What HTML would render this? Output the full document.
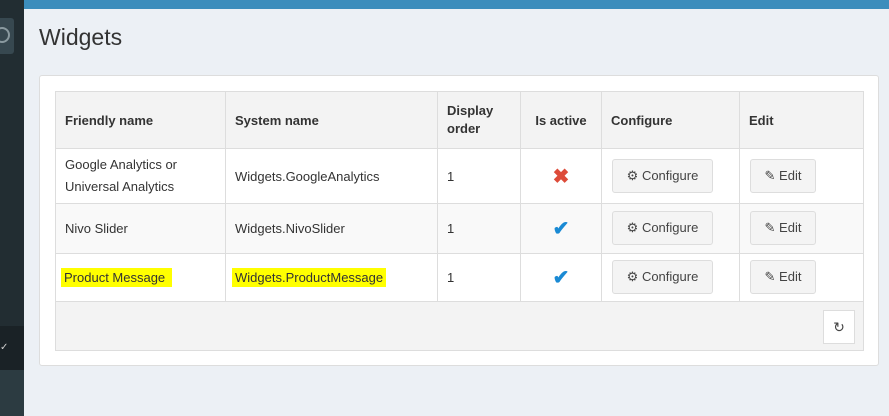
<!DOCTYPE html><html><head><style>
*{margin:0;padding:0;box-sizing:border-box}
body{width:889px;height:416px;background:#ecf0f5;font-family:"Liberation Sans",sans-serif;font-size:13px;color:#333;position:relative;overflow:hidden}
.a{position:absolute}
.cell{position:absolute;display:flex;align-items:center;padding-left:9px;border-right:1px solid #ddd;border-bottom:1px solid #ddd}
.h{font-weight:bold;background:#f3f3f3}
.btn{position:absolute;background:#f4f4f4;border:1px solid #ddd;border-radius:3px;height:34px;display:flex;align-items:center;justify-content:center;font-size:13px;color:#444}
.hl{background:#ff0;padding:2px 3px}
</style></head><body>
<div class="a" style="left:0;top:0;width:24px;height:416px;background:#222d32"></div>
<div class="a" style="left:0;top:18px;width:14px;height:36px;background:#374850;border-radius:0 3px 3px 0"></div>
<div class="a" style="left:-6px;top:27px;width:16px;height:16px;border:2px solid #8a9aa0;border-radius:50%"></div>
<div class="a" style="left:0;top:326px;width:24px;height:44px;background:#1a2226"></div>
<div class="a" style="left:0;top:342px;color:#ccc;font-size:10px">✓</div>
<div class="a" style="left:0;top:370px;width:24px;height:46px;background:#2c3b41"></div>
<div class="a" style="left:24px;top:0;width:865px;height:9px;background:#3c8dbc"></div>
<div class="a" style="left:39px;top:24px;font-size:23px;color:#333">Widgets</div>
<div class="a" style="left:39px;top:75px;width:840px;height:291px;background:#fff;border:1px solid #ddd;border-radius:3px"></div>
<div class="a" style="left:55px;top:91px;width:809px;height:260px;border:1px solid #ddd;border-right:0;border-bottom:0"></div>
<!-- header -->
<div class="cell h" style="left:56px;top:92px;width:170px;height:57px">Friendly name</div>
<div class="cell h" style="left:226px;top:92px;width:212px;height:57px">System name</div>
<div class="cell h" style="left:438px;top:92px;width:83px;height:57px;line-height:18px">Display<br>order</div>
<div class="cell h" style="left:521px;top:92px;width:81px;height:57px;justify-content:center;padding:0">Is active</div>
<div class="cell h" style="left:602px;top:92px;width:138px;height:57px">Configure</div>
<div class="cell h" style="left:740px;top:92px;width:124px;height:57px">Edit</div>
<!-- rows -->
<div class="cell" style="left:56px;top:149px;width:170px;height:55px;line-height:22px">Google Analytics or<br>Universal Analytics</div>
<div class="cell" style="left:226px;top:149px;width:212px;height:55px">Widgets.GoogleAnalytics</div>
<div class="cell" style="left:438px;top:149px;width:83px;height:55px">1</div>
<div class="cell" style="left:521px;top:149px;width:81px;height:55px;justify-content:center;padding:0;color:#dd4b39;font-size:20px;font-weight:bold">✖</div>
<div class="cell" style="left:602px;top:149px;width:138px;height:55px"></div>
<div class="cell" style="left:740px;top:149px;width:124px;height:55px"></div>

<div class="cell" style="background:#f9f9f9;left:56px;top:204px;width:170px;height:50px">Nivo Slider</div>
<div class="cell" style="background:#f9f9f9;left:226px;top:204px;width:212px;height:50px">Widgets.NivoSlider</div>
<div class="cell" style="background:#f9f9f9;left:438px;top:204px;width:83px;height:50px">1</div>
<div class="cell" style="background:#f9f9f9;left:521px;top:204px;width:81px;height:50px;justify-content:center;padding:0;color:#1a8ad4;font-size:20px;font-weight:bold">✔</div>
<div class="cell" style="background:#f9f9f9;left:602px;top:204px;width:138px;height:50px"></div>
<div class="cell" style="background:#f9f9f9;left:740px;top:204px;width:124px;height:50px"></div>

<div class="cell" style="left:56px;top:254px;width:170px;height:48px;padding-left:5px"><span class="hl">Product Message&nbsp;</span></div>
<div class="cell" style="left:226px;top:254px;width:212px;height:48px;padding-left:6px"><span class="hl">Widgets.ProductMessage</span></div>
<div class="cell" style="left:438px;top:254px;width:83px;height:48px">1</div>
<div class="cell" style="left:521px;top:254px;width:81px;height:48px;justify-content:center;padding:0;color:#1a8ad4;font-size:20px;font-weight:bold">✔</div>
<div class="cell" style="left:602px;top:254px;width:138px;height:48px"></div>
<div class="cell" style="left:740px;top:254px;width:124px;height:48px"></div>
<div class="a" style="left:56px;top:302px;width:808px;height:49px;background:#f3f3f3;border-bottom:1px solid #ddd;border-right:1px solid #ddd"></div>

<div class="btn" style="left:612px;top:159px;width:101px">⚙&nbsp;Configure</div>
<div class="btn" style="left:750px;top:159px;width:66px">✎&nbsp;Edit</div>
<div class="btn" style="left:612px;top:211px;width:101px">⚙&nbsp;Configure</div>
<div class="btn" style="left:750px;top:211px;width:66px">✎&nbsp;Edit</div>
<div class="btn" style="left:612px;top:260px;width:101px">⚙&nbsp;Configure</div>
<div class="btn" style="left:750px;top:260px;width:66px">✎&nbsp;Edit</div>
<div class="btn" style="left:823px;top:310px;width:32px;height:34px;background:#fff;border-radius:0;font-size:14px">↻</div>
</body></html>
